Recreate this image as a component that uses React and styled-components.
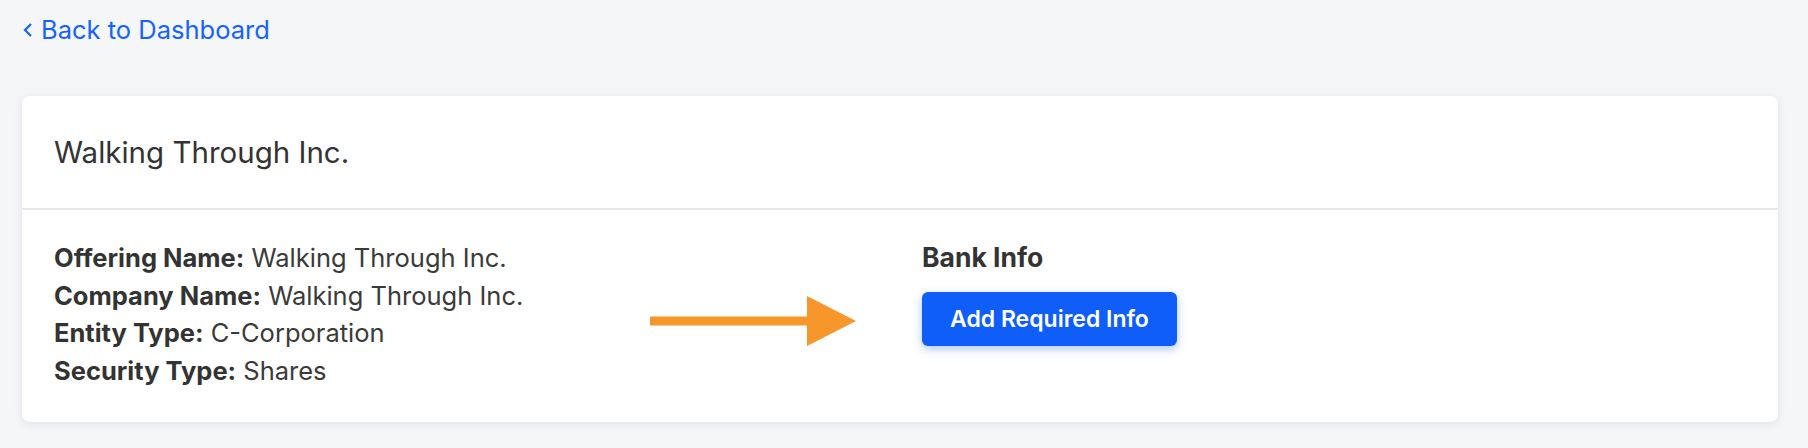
import React from "react";
import styled, { createGlobalStyle } from "styled-components";

const GlobalStyle = createGlobalStyle`
  html, body {
    margin: 0;
    padding: 0;
    background: #f5f6f8;
    font-family: Inter, "Noto Sans", "Liberation Sans", sans-serif;
    color: #333;
  }
`;

const Page = styled.div`
  padding: 18px 30px 26px 22px;
`;

const BackLink = styled.a`
  display: inline-flex;
  align-items: center;
  gap: 8px;
  color: #1563ff;
  font-size: 25.5px;
  line-height: 24px;
  text-decoration: none;
  svg {
    margin-left: 1px;
  }
`;

const Card = styled.section`
  margin-top: 54px;
  background: #fff;
  border-radius: 8px;
  box-shadow: 0 2px 10px rgba(20, 30, 50, 0.09);
`;

const CardHeader = styled.header`
  height: 112px;
  display: flex;
  align-items: center;
  padding: 0 32px;
  border-bottom: 2px solid #e7e7e7;
  font-size: 29.5px;
  color: #333;
`;

const CardBody = styled.div`
  position: relative;
  display: grid;
  grid-template-columns: 868px 1fr;
  padding: 29px 32px 33px;
`;

const InfoList = styled.div`
  font-size: 25.5px;
  line-height: 37.5px;
  color: #3a3a3a;
`;

const Label = styled.b`
  font-weight: 700;
  color: #333;
`;

const BankTitle = styled.div`
  font-size: 26.5px;
  line-height: 37.5px;
  font-weight: 700;
  color: #333;
`;

const Button = styled.button`
  margin-top: 15.5px;
  height: 54px;
  padding: 0 28px;
  border: none;
  border-radius: 6px;
  background: #105efa;
  color: #fff;
  font-family: inherit;
  font-size: 23px;
  font-weight: 600;
  box-shadow: 0 3px 10px rgba(16, 94, 250, 0.35);
  cursor: pointer;
`;

const Arrow = styled.svg`
  position: absolute;
  left: 628px;
  top: 86px;
`;

const rows = [
  ["Offering Name:", "Walking Through Inc."],
  ["Company Name:", "Walking Through Inc."],
  ["Entity Type:", "C-Corporation"],
  ["Security Type:", "Shares"],
];

export default function App() {
  return (
    <Page>
      <GlobalStyle />
      <BackLink href="#">
        <svg width="10" height="14" viewBox="0 0 10 14">
          <polyline points="8,1 2,7 8,13" fill="none" stroke="#1563ff" strokeWidth="2.2" />
        </svg>
        Back to Dashboard
      </BackLink>
      <Card>
        <CardHeader>Walking Through Inc.</CardHeader>
        <CardBody>
          <InfoList>
            {rows.map(([label, value]) => (
              <div key={label}>
                <Label>{label}</Label> {value}
              </div>
            ))}
          </InfoList>
          <div>
            <BankTitle>Bank Info</BankTitle>
            <Button>Add Required Info</Button>
          </div>
          <Arrow width="206" height="50" viewBox="0 0 206 50">
            <rect x="0" y="20.5" width="160" height="9" fill="#f7962b" />
            <polygon points="157,0 206,25 157,50" fill="#f7962b" />
          </Arrow>
        </CardBody>
      </Card>
    </Page>
  );
}
